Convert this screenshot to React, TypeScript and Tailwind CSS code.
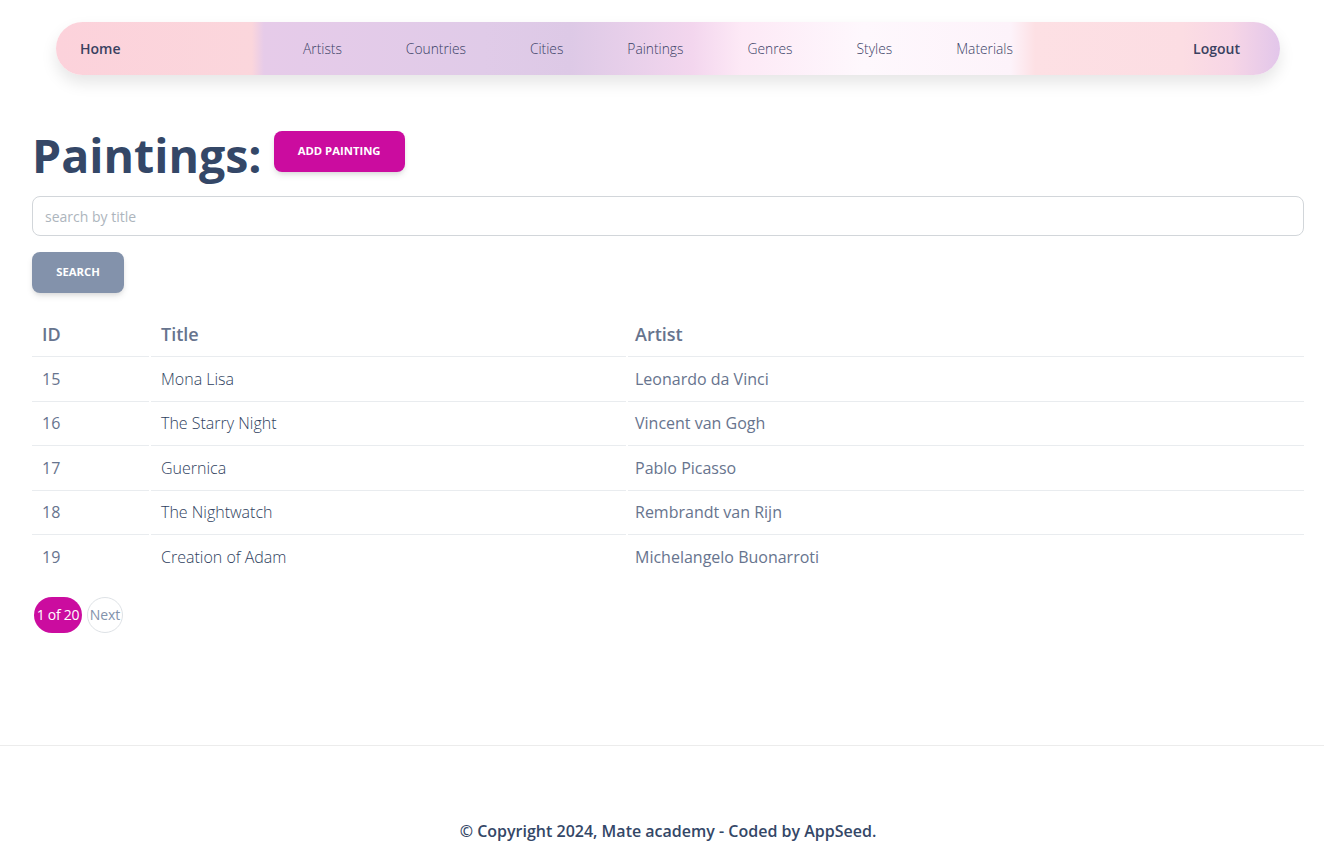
import React from "react";

const rows = [
  ["15", "Mona Lisa", "Leonardo da Vinci"],
  ["16", "The Starry Night", "Vincent van Gogh"],
  ["17", "Guernica", "Pablo Picasso"],
  ["18", "The Nightwatch", "Rembrandt van Rijn"],
  ["19", "Creation of Adam", "Michelangelo Buonarroti"],
];

export default function App() {
  return (
    <div className="min-h-[859px] bg-white flex flex-col" style={{ fontFamily: '"Open Sans", sans-serif' }}>
      <div className="pt-[22px] px-[56px] pr-[44px]">
        <nav className="h-[53px] rounded-full flex items-center pl-[24px] pr-[40px] shadow-[0_8px_16px_rgba(0,0,0,0.10)] bg-[linear-gradient(90deg,#fcd2db_0%,#fbd6dc_16%,#e6cbe9_17%,#e0cbe8_35%,#ddc9e6_42%,#f3d6ee_52%,#fde9f6_56%,#fef8fd_66%,#fdf3fa_78%,#fde0e4_80%,#fcdde3_92%,#f7d6e6_96%,#e2c6ea_100%)]">
          <span className="text-[14px] font-semibold text-[#3a4160] w-[223px]">Home</span>
          <div className="flex items-center gap-[64px] pt-[2px] text-[13.8px] font-[350] text-[#3a4166]">
            <span>Artists</span>
            <span>Countries</span>
            <span>Cities</span>
            <span>Paintings</span>
            <span>Genres</span>
            <span>Styles</span>
            <span>Materials</span>
          </div>
          <span className="ml-auto text-[14px] font-semibold text-[#3a4160]">Logout</span>
        </nav>
      </div>

      <main className="px-[32px] pr-[20px]">
        <div className="flex items-center gap-[12px] mt-[50px]">
          <h1 className="text-[46.5px] leading-[60px] font-bold text-[#344767]">Paintings:</h1>
          <button className="h-[41px] px-[24px] rounded-lg bg-[#cb0c9f] text-white text-[11.3px] font-bold uppercase shadow-[0_4px_7px_-1px_rgba(0,0,0,0.11),0_2px_4px_-1px_rgba(0,0,0,0.07)] -mt-[8px]">
            Add painting
          </button>
        </div>
        <input
          className="mt-[11px] w-full h-[40px] border border-[#d2d6da] rounded-lg px-[12px] text-[14px] placeholder:text-[#adb5bd] outline-none"
          placeholder="search by title"
        />
        <button className="mt-[16px] h-[41px] w-[92px] rounded-lg bg-[#8392ab] text-white text-[11.3px] font-bold uppercase shadow-[0_4px_7px_-1px_rgba(0,0,0,0.11),0_2px_4px_-1px_rgba(0,0,0,0.07)]">
          Search
        </button>

        <div className="mt-[20px] grid grid-cols-[117px_475px_1fr] gap-x-[2px]">
          <div className="h-[44px] flex items-center pl-[10px] text-[18px] font-semibold text-[#67748e] border-b border-[#e9ecef]">ID</div>
          <div className="h-[44px] flex items-center pl-[10px] text-[18px] font-semibold text-[#67748e] border-b border-[#e9ecef]">Title</div>
          <div className="h-[44px] flex items-center pl-[7px] text-[18px] font-semibold text-[#67748e] border-b border-[#e9ecef]">Artist</div>
          {rows.map((r, i) => (
            <React.Fragment key={r[0]}>
              <div className={`h-[44.5px] flex items-center pl-[10px] text-[16px] text-[#67748e] ${i < rows.length - 1 ? "border-b border-[#e9ecef]" : ""}`}>{r[0]}</div>
              <div className={`h-[44.5px] flex items-center pl-[10px] text-[16px] font-[350] text-[#2f3f60] ${i < rows.length - 1 ? "border-b border-[#e9ecef]" : ""}`}>{r[1]}</div>
              <div className={`h-[44.5px] flex items-center pl-[7px] text-[16px] text-[#67748e] ${i < rows.length - 1 ? "border-b border-[#e9ecef]" : ""}`}>{r[2]}</div>
            </React.Fragment>
          ))}
        </div>

        <div className="mt-[17px] flex items-center gap-[5px] pl-[2px]">
          <span className="h-[36px] w-[48px] rounded-full bg-[#cb0c9f] text-white text-[14px] flex items-center justify-center whitespace-nowrap tracking-[-0.3px]">1 of 20</span>
          <span className="h-[36px] w-[36px] rounded-full border border-[#dee2e6] text-[#8392ab] text-[14px] flex items-center justify-center">Next</span>
        </div>
      </main>

      <footer className="mt-[112px] border-t border-[#ececec] pt-[73px] pb-[16px] pl-[12px] text-center">
        <p className="text-[16px] font-semibold text-[#344767]">© Copyright 2024, Mate academy - Coded by AppSeed.</p>
      </footer>
    </div>
  );
}
